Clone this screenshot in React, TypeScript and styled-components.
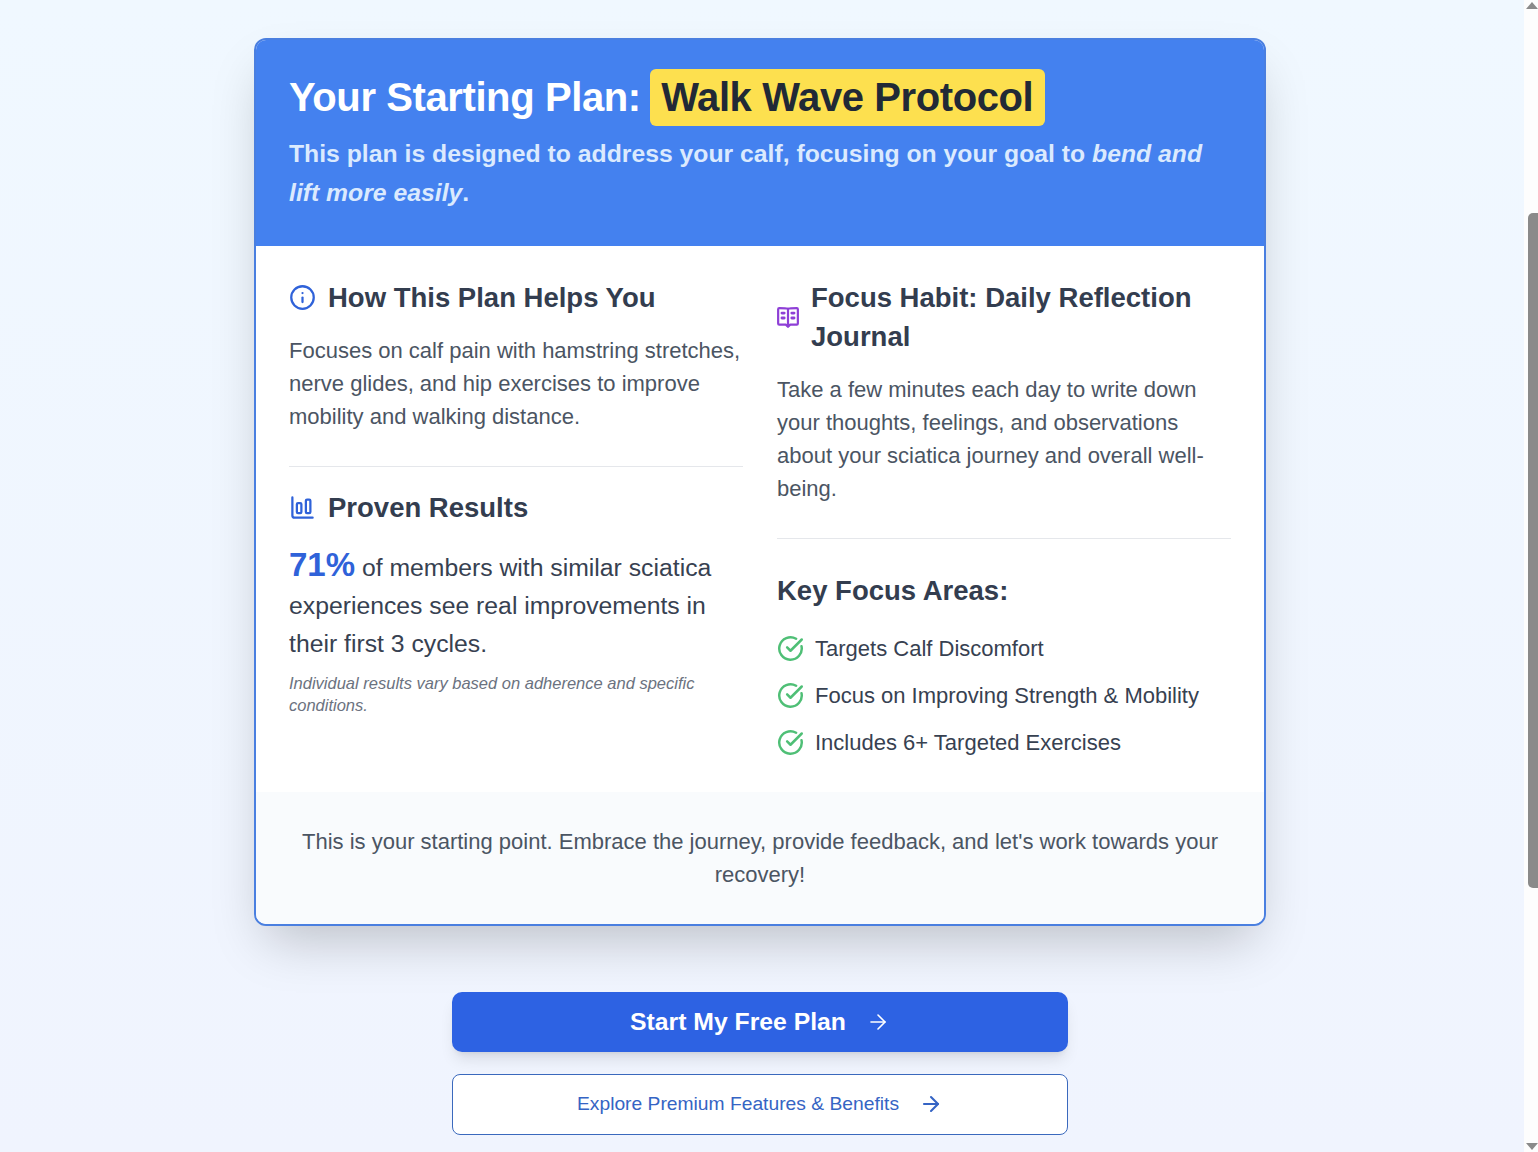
import React from 'react'
import styled, { createGlobalStyle } from 'styled-components'
import { ArrowRight, ChartColumnBig, CircleCheckBig, Info } from 'lucide-react'

const GlobalStyle = createGlobalStyle`
	html, body {
		margin: 0;
		height: 1152px;
		overflow: hidden;
		background: #ffffff;
		font-family: "Liberation Sans", Arial, sans-serif;
	}
	* { box-sizing: border-box; }
`

const Page = styled.div`
	width: 1524px;
	height: 1152px;
	overflow: hidden;
	padding: 38px 4px 0 0;
	background: linear-gradient(to bottom, #f0f8ff, #f0f4fe);
`

const Column = styled.div`
	width: 1012px;
	margin-left: 254px;
	display: flex;
	flex-direction: column;
	align-items: center;
`

const Card = styled.section`
	width: 100%;
	background: #ffffff;
	border: 2px solid #4a7fe0;
	border-radius: 12px;
	overflow: hidden;
	box-shadow: 0 25px 50px -12px rgba(0, 0, 0, 0.22);
`

const Header = styled.header`
	height: 208px;
	margin: -2px -2px 0;
	padding: 31px 35px 0;
	background: #4481ef;
`

const Title = styled.h1`
	margin: 0 0 8px;
	display: flex;
	align-items: center;
	gap: 9.5px;
	font-size: 40px;
	line-height: 57px;
	font-weight: 700;
	letter-spacing: -0.4px;
	color: #ffffff;
`

const Highlight = styled.span`
	display: inline-block;
	padding: 0 12px 0 11px;
	background: #fde04f;
	color: #212936;
	border-radius: 6px;
`

const Subtitle = styled.p`
	margin: 0;
	font-size: 24.75px;
	line-height: 39px;
	font-weight: 700;
	color: #dbeafe;
`

const Columns = styled.div`
	display: grid;
	grid-template-columns: 454px 454px;
	gap: 34px;
	padding: 32px 33px 33px;
`

const Block = styled.div`
	display: flex;
	flex-direction: column;
`

const SectionHead = styled.div`
	display: flex;
	align-items: center;
	gap: 12px;
	margin-bottom: 17px;
`

const HeadIcon = styled.span`
	display: flex;
	flex-shrink: 0;
	color: ${(p: { $color: string }) => p.$color};
`

const Heading = styled.h2`
	margin: 0;
	font-size: 27.5px;
	line-height: 39px;
	font-weight: 700;
	color: #333d4f;
`

const Body = styled.p`
	margin: 0;
	font-size: 22px;
	line-height: 33px;
	color: #4b5563;
`

const Divider = styled.hr`
	width: 100%;
	margin: ${(p: { $top: number; $bottom: number }) => `${p.$top}px 0 ${p.$bottom}px`};
	border: 0;
	border-top: 1px solid #e5e7eb;
`

const Stat = styled.p`
	margin: 2px 0 9px;
	font-size: 24.75px;
	line-height: 38px;
	color: #374151;
`

const StatValue = styled.strong`
	font-size: 33px;
	font-weight: 700;
	color: #2f62d9;
`

const Note = styled.p`
	margin: 0;
	font-size: 16.5px;
	line-height: 22px;
	font-style: italic;
	color: #6b7280;
`

const SubHeading = styled.h3`
	margin: 0 0 22px;
	font-size: 27.5px;
	line-height: 39px;
	font-weight: 700;
	color: #333d4f;
`

const FocusList = styled.ul`
	list-style: none;
	margin: 0;
	padding: 0;
	display: flex;
	flex-direction: column;
	gap: 14px;
`

const FocusItem = styled.li`
	display: flex;
	align-items: center;
	gap: 11px;
	font-size: 22px;
	line-height: 33px;
	color: #374151;

	& svg {
		flex-shrink: 0;
		color: #4fbf76;
	}
`

const Footer = styled.footer`
	padding: 33px;
	background: #f9fbfd;
	text-align: center;
	font-size: 22px;
	line-height: 33px;
	color: #4b5563;
`

const Actions = styled.div`
	width: 616px;
	margin-top: 66px;
	display: flex;
	flex-direction: column;
	gap: 22px;
`

const PrimaryButton = styled.button`
	height: 60px;
	display: flex;
	align-items: center;
	justify-content: center;
	gap: 20px;
	padding: 0 0 1px;
	border: 0;
	border-radius: 10px;
	background: #2d62e3;
	color: #ffffff;
	font-family: inherit;
	font-size: 24.75px;
	font-weight: 700;
	box-shadow: 0 10px 15px -3px rgba(0, 0, 0, 0.1), 0 4px 6px -4px rgba(0, 0, 0, 0.1);
`

const SecondaryButton = styled.button`
	height: 61px;
	display: flex;
	align-items: center;
	justify-content: center;
	gap: 20px;
	padding: 0 0 1px;
	border: 1px solid #3a69bd;
	border-radius: 8px;
	background: #ffffff;
	color: #3564c4;
	font-family: inherit;
	font-size: 19.25px;
`

const Scrollbar = styled.div`
	position: fixed;
	top: 0;
	right: 0;
	bottom: 0;
	width: 14px;
	background: #fdfdfd;
`

const ThumbBar = styled.div`
	position: absolute;
	top: 213px;
	right: 0;
	width: 10px;
	height: 675px;
	border-radius: 5px 0 0 5px;
	background: #8a8a8a;
`

const ArrowUp = styled.div`
	position: absolute;
	top: 2px;
	right: 0;
	width: 0;
	height: 0;
	border-left: 6px solid transparent;
	border-right: 6px solid transparent;
	border-bottom: 7px solid #8a8a8a;
`

const ArrowDown = styled(ArrowUp)`
	top: auto;
	bottom: 2px;
	border-bottom: 0;
	border-top: 7px solid #8a8a8a;
`

// lucide's book icons don't have the boxed pages of the reference
const JournalIcon = () => (
	<svg width="22" height="23" viewBox="2 2 20 21" fill="none" stroke="currentColor" strokeWidth="2" strokeLinejoin="round" strokeLinecap="round">
		<path d="M12 4.5C10.5 4 9 4 4 4a1 1 0 0 0-1 1v13a1 1 0 0 0 1 1h6l2 2 2-2h6a1 1 0 0 0 1-1V5a1 1 0 0 0-1-1c-5 0-6.500 0-8 .5z" />
		<path d="M12 4.500v16" />
		<path d="M6.500 8.500h2M6.500 13h2M15.500 8.500h2M15.500 13h2" strokeWidth="2.600" />
	</svg>
)

export default function App() {
	return (
		<>
			<GlobalStyle />
			<Page>
				<Column>
					<Card>
						<Header>
							<Title>
								Your Starting Plan: <Highlight>Walk Wave Protocol</Highlight>
							</Title>
							<Subtitle>
								This plan is designed to address your calf, focusing on your goal to <em>bend and lift more easily</em>.
							</Subtitle>
						</Header>
						<Columns>
							<Block>
								<SectionHead>
									<HeadIcon $color="#2f62d9"><Info size={27} strokeWidth={2} /></HeadIcon>
									<Heading>How This Plan Helps You</Heading>
								</SectionHead>
								<Body>
									Focuses on calf pain with hamstring stretches, nerve glides, and hip exercises to improve mobility and walking distance.
								</Body>
								<Divider $top={33} $bottom={21} />
								<SectionHead>
									<HeadIcon $color="#2f62d9"><ChartColumnBig size={27} strokeWidth={2} /></HeadIcon>
									<Heading>Proven Results</Heading>
								</SectionHead>
								<Stat>
									<StatValue>71%</StatValue> of members with similar sciatica experiences see real improvements in their first 3 cycles.
								</Stat>
								<Note>Individual results vary based on adherence and specific conditions.</Note>
							</Block>
							<Block>
								<SectionHead>
									<HeadIcon $color="#8e3fd6"><JournalIcon /></HeadIcon>
									<Heading>Focus Habit: Daily Reflection Journal</Heading>
								</SectionHead>
								<Body>
									Take a few minutes each day to write down your thoughts, feelings, and observations about your sciatica journey and overall well-being.
								</Body>
								<Divider $top={33} $bottom={32} />
								<SubHeading>Key Focus Areas:</SubHeading>
								<FocusList>
									<FocusItem><CircleCheckBig size={27} strokeWidth={2.2} />Targets Calf Discomfort</FocusItem>
									<FocusItem><CircleCheckBig size={27} strokeWidth={2.2} />Focus on Improving Strength &amp; Mobility</FocusItem>
									<FocusItem><CircleCheckBig size={27} strokeWidth={2.2} />Includes 6+ Targeted Exercises</FocusItem>
								</FocusList>
							</Block>
						</Columns>
						<Footer>
							This is your starting point. Embrace the journey, provide feedback, and let's work towards your recovery!
						</Footer>
					</Card>
					<Actions>
						<PrimaryButton>Start My Free Plan <ArrowRight size={24} strokeWidth={1.6} /></PrimaryButton>
						<SecondaryButton>Explore Premium Features &amp; Benefits <ArrowRight size={24} strokeWidth={2.1} /></SecondaryButton>
					</Actions>
				</Column>
			</Page>
			<Scrollbar>
				<ArrowUp />
				<ThumbBar />
				<ArrowDown />
			</Scrollbar>
		</>
	)
}
